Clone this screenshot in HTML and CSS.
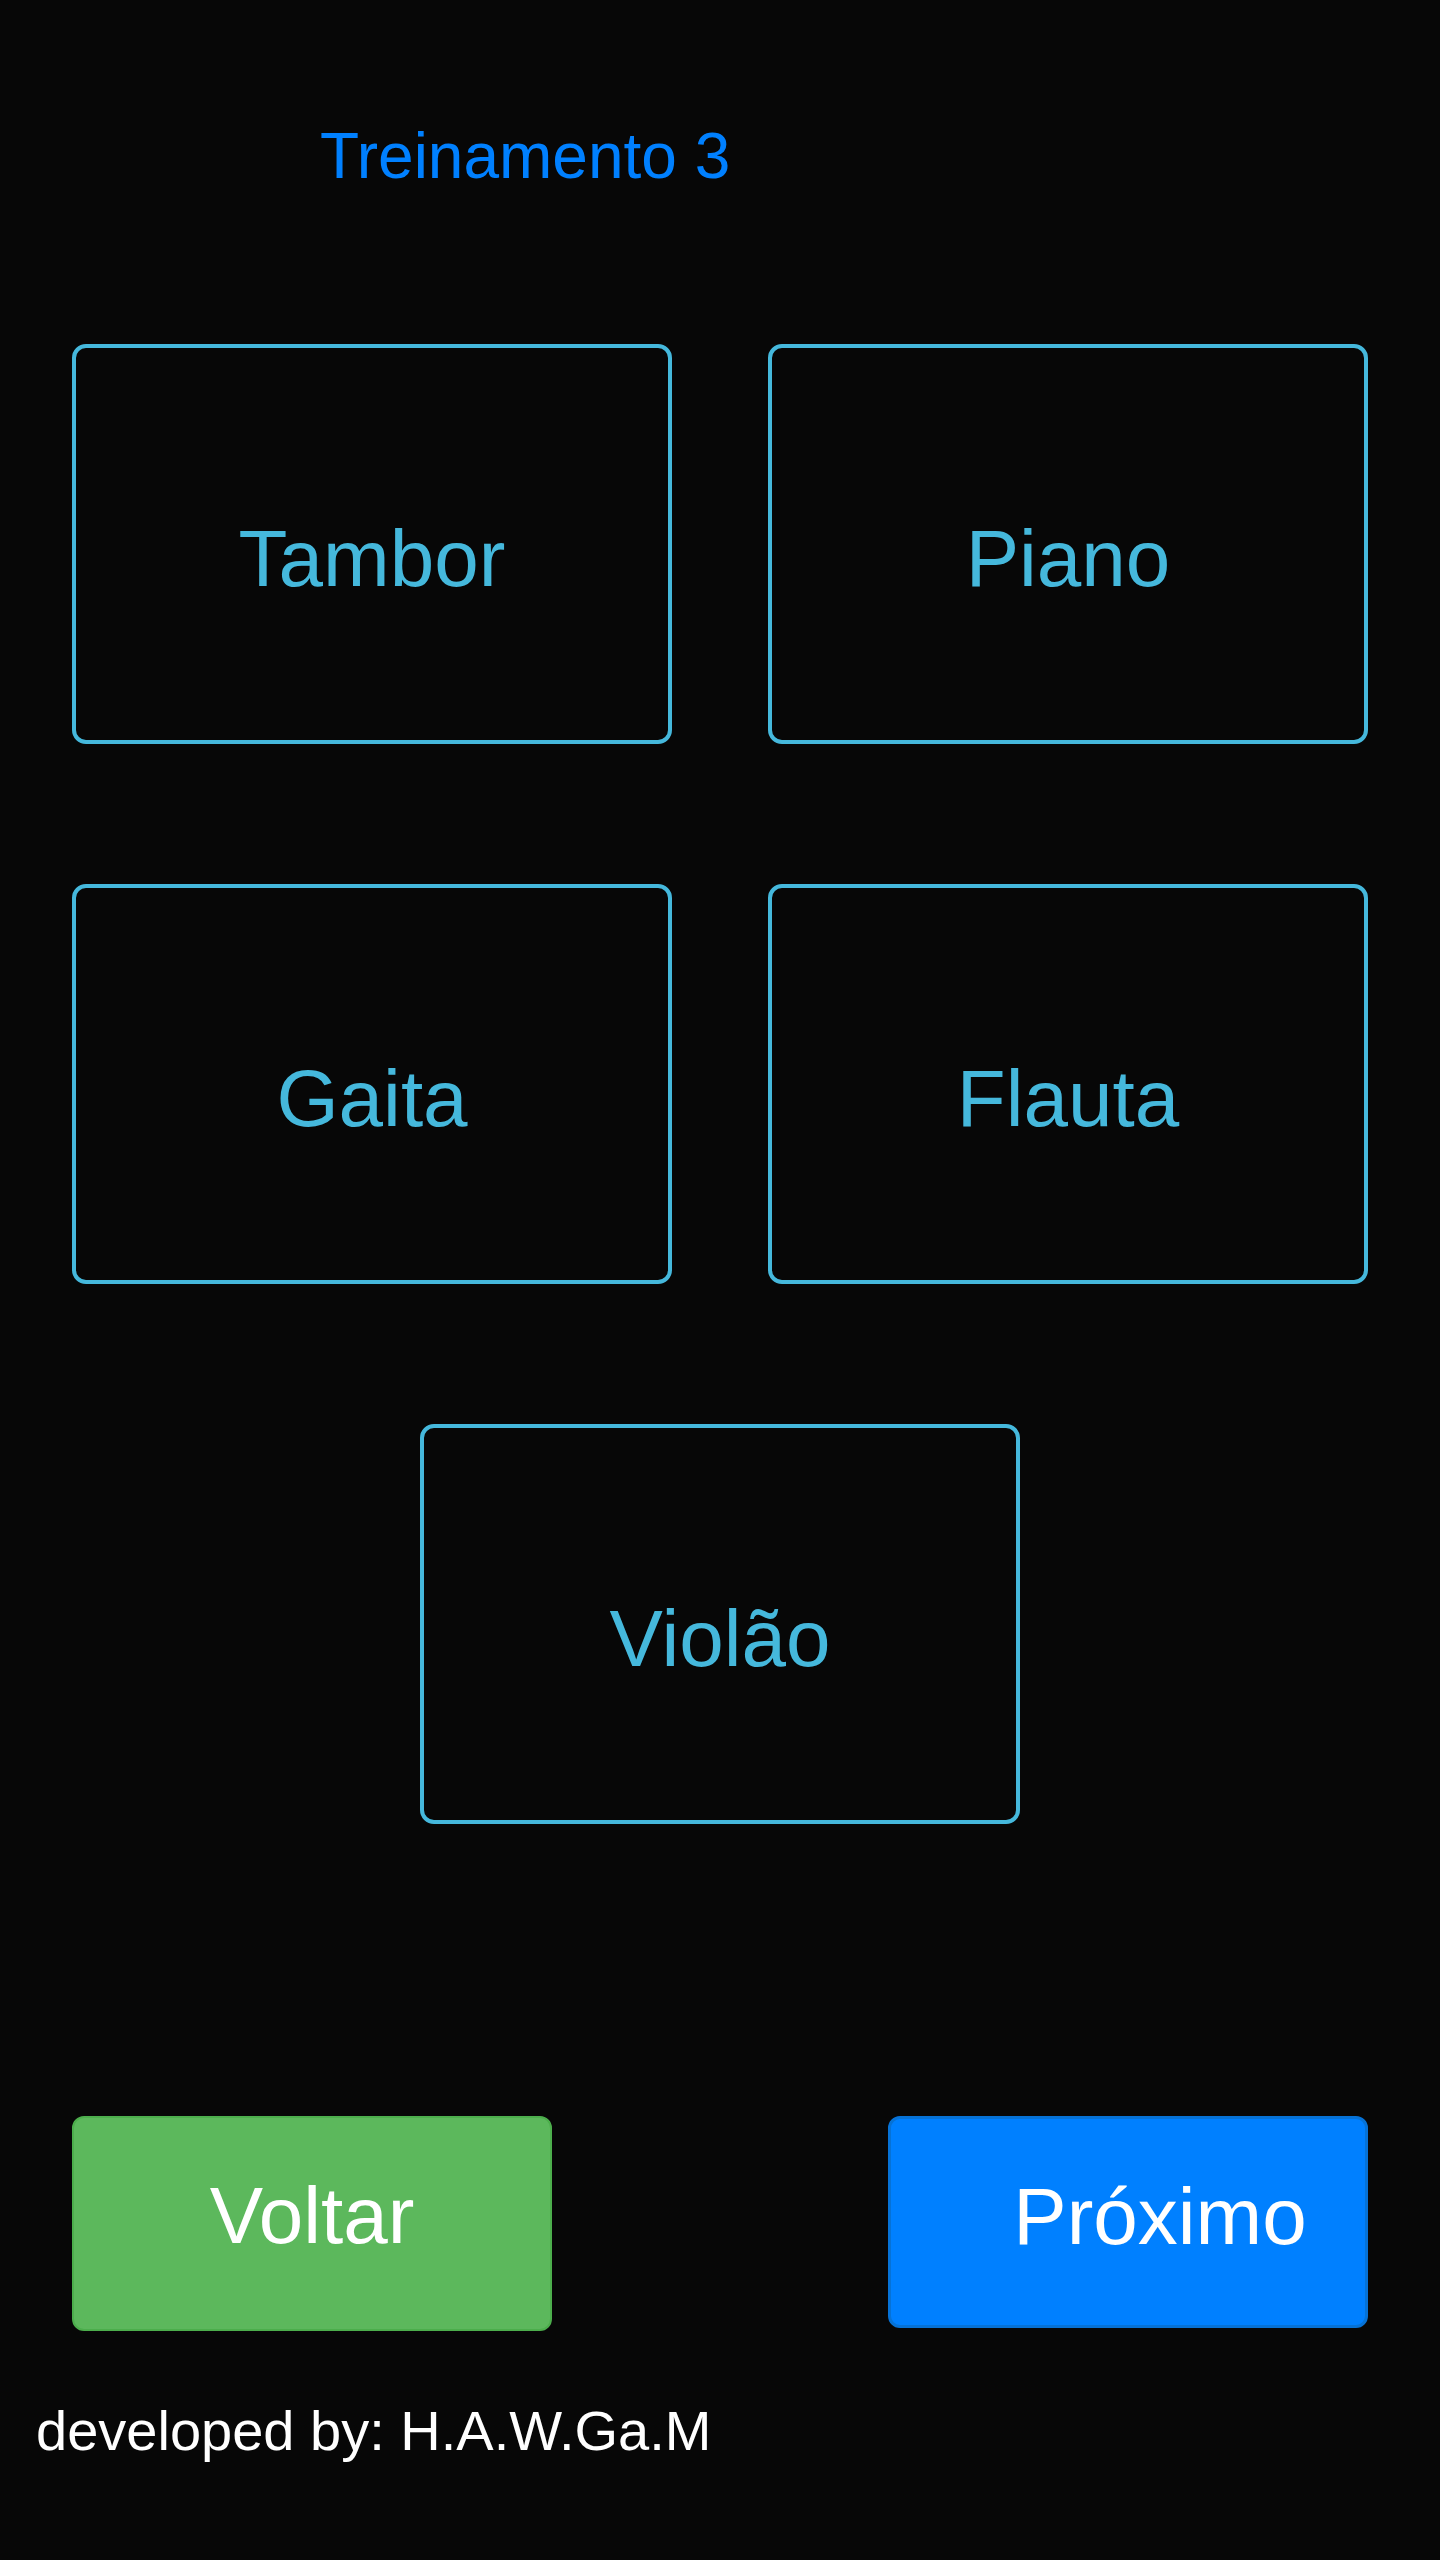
FILE: index.html
```html
<!DOCTYPE html>
<html lang="pt">
<head>
<meta charset="utf-8">
<title>Treinamento 3</title>
<link rel="stylesheet" href="styles.css">
</head>
<body>
<div class="page">
  <header class="header">
    <h1 class="title">Treinamento 3</h1>
  </header>
  <main class="grid">
    <div class="option">Tambor</div>
    <div class="option">Piano</div>
    <div class="option">Gaita</div>
    <div class="option">Flauta</div>
    <div class="option option-center">Violão</div>
  </main>
  <nav class="actions">
    <button class="btn btn-back">Voltar</button>
    <button class="btn btn-next">Próximo</button>
  </nav>
  <footer class="footer">developed by: H.A.W.Ga.M</footer>
</div>
</body>
</html>
```
FILE: styles.css
```css
html, body {
  margin: 0;
  padding: 0;
  background: #070707;
}
body {
  font-family: "Liberation Sans", Arial, sans-serif;
  min-height: 2560px;
}
.page {
  width: 1440px;
}
.header {
  padding-top: 119px;
  padding-left: 320px;
}
.title {
  margin: 0;
  font-size: 64px;
  font-weight: normal;
  line-height: 74px;
  color: #0080ff;
}
.grid {
  margin-top: 151px;
  padding: 0 72px;
  display: grid;
  grid-template-columns: 600px 600px;
  column-gap: 96px;
  row-gap: 140px;
}
.option {
  box-sizing: border-box;
  width: 600px;
  height: 400px;
  border: 4px solid #45b8dc;
  border-radius: 14px;
  color: #45b8dc;
  font-size: 80px;
  line-height: normal;
  display: flex;
  align-items: center;
  justify-content: center;
  padding-top: 30px;
}
.option-center {
  grid-column: 1 / -1;
  justify-self: center;
}
.actions {
  margin-top: 292px;
  padding: 0 72px;
  display: flex;
  justify-content: space-between;
  align-items: flex-start;
}
.btn {
  box-sizing: border-box;
  width: 480px;
  margin: 0;
  font-family: "Liberation Sans", Arial, sans-serif;
  font-size: 80px;
  line-height: normal;
  color: #ffffff;
  border-radius: 12px;
  text-align: center;
  display: block;
}
.btn-back {
  height: 215px;
  background: #5cb85c;
  border: 2px solid #4cae4c;
  padding: 0 0 15px 0;
}
.btn-next {
  height: 212px;
  background: #0080ff;
  border: 3px solid #0672d6;
  padding: 0 0 11px 64px;
}
.footer {
  margin-top: 67px;
  padding-left: 36px;
  font-size: 56px;
  color: #ffffff;
  line-height: normal;
}
```
